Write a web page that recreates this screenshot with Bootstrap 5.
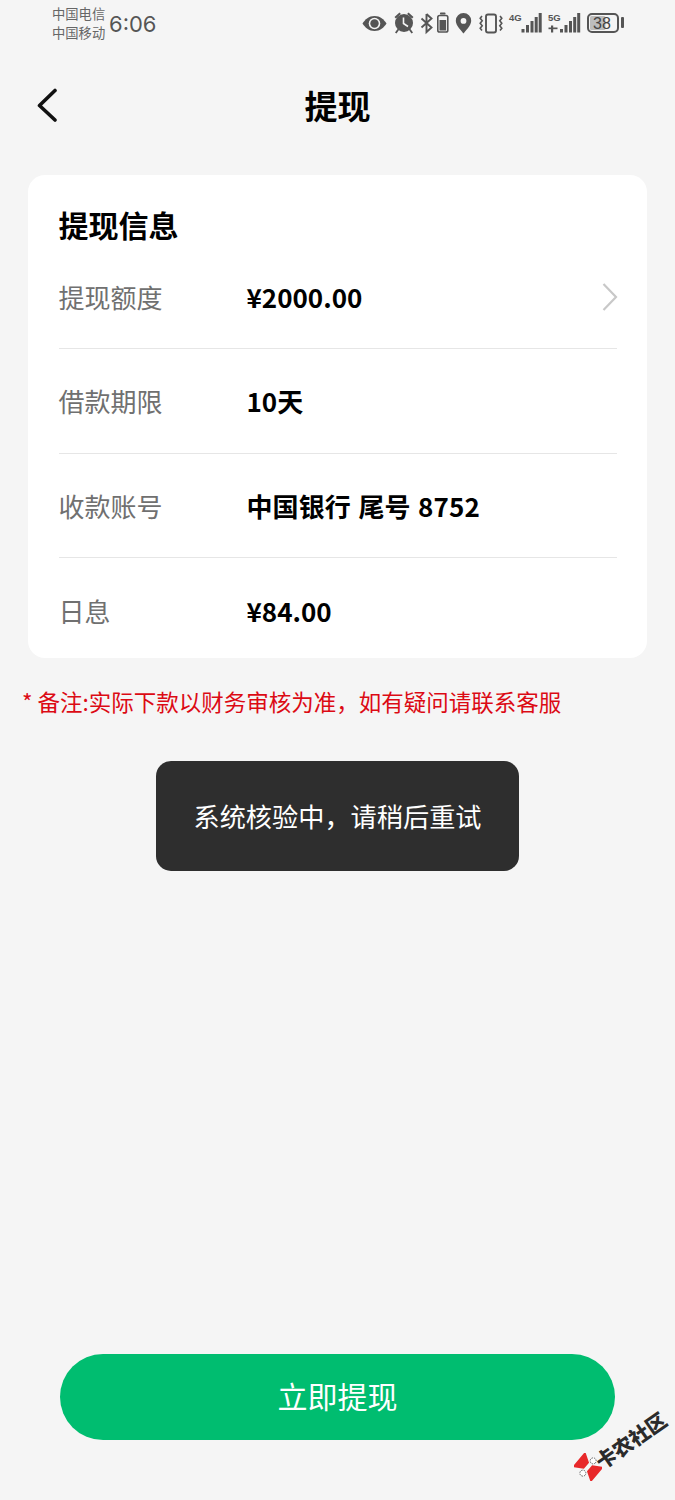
<!DOCTYPE html>
<html lang="zh-CN">
<head>
<meta charset="utf-8">
<title>提现</title>
<link rel="stylesheet" href="https://cdn.jsdelivr.net/npm/bootstrap@5.3.0/dist/css/bootstrap.min.css">
<style>
html,body{margin:0;background:#f5f5f5;}
body{font-family:"Noto Sans CJK SC","Noto Sans",sans-serif;color:#000;}
.page-wrap{width:675px;height:1500px;position:relative;overflow:hidden;padding-bottom:60px;}
.status-strip{height:48px;padding:4px 51px 0 52px;color:#555;}
.carriers{font-size:13.300px;line-height:19px;color:#666;width:56px;}
.clock{font-family:"Inter","Noto Sans",sans-serif;font-size:22px;line-height:39px;color:#555;margin-left:1px;height:39px;padding-top:1px;}
.st-icons{margin-left:auto;height:38px;}
.st-icons svg{display:block;}
.head-bar{height:118px;position:relative;}
.back-arrow{position:absolute;left:36px;top:40px;}
.head-title{font-size:33px;font-weight:700;line-height:114px;text-align:center;}
.info-panel{margin:9px 28px 0 28px;height:483px;background:#fff;border-radius:17px;border:0;padding:0 30px 0 30.500px;}
.panel-title{font-size:30px;font-weight:700;line-height:42px;padding-top:28px;height:73px;}
.info-line{height:104.500px;border-bottom:1px solid #e6e6e6;position:relative;align-items:center;}
.info-line.top-line{height:101px;padding-bottom:3px;}
.info-line.end-line{border-bottom:0;height:100px;padding-top:4px;}
.line-label{font-size:26px;color:#707070;width:188px;flex:none;}
.line-value{font-size:26px;font-weight:700;color:#000;}
.wide-words{word-spacing:1.500px;letter-spacing:.1px;}
.chev{position:absolute;right:-2px;top:34px;}
.note-text{font-size:22.500px;color:#dc0a14;margin:26px 0 0 22px;line-height:34px;white-space:nowrap;}
.toast-box{width:363px;height:110px;margin:43px auto 0;background:#2e2e2e;border-radius:15px;color:#fff;font-size:26.200px;line-height:38px;}
.cta{width:555px;height:86px;margin:auto auto 0;background:#00bd70;border-radius:43px;color:#fff;font-size:30px;border:0;padding:0 0 4px;}
.cta:hover,.cta:active{background:#00bd70!important;color:#fff!important;}
.mark-wrap{position:absolute;left:572px;top:1439px;width:100px;height:0;}
.mark-text{position:absolute;left:25px;top:8px;font-size:20.300px;font-weight:900;color:#2b2b2b;white-space:nowrap;transform:rotate(-35deg);transform-origin:0 50%;line-height:32px;}
.mark-logo{position:absolute;left:2px;top:14px;}
</style>
</head>
<body>
<div class="page-wrap d-flex flex-column">
  <div class="status-strip d-flex align-items-start">
    <div class="carriers"><div>中国电信</div><div>中国移动</div></div>
    <div class="clock">6:06</div>
    <div class="st-icons d-flex align-items-center">
      <svg width="272" height="38" viewBox="0 0 272 38">
        <g fill="#555" stroke="none">
          <!-- eye -->
          <path d="M22.500 12C28 12 32 15.500 34.500 19.500C32 23.500 28 27 22.500 27S13 23.500 10.500 19.500C13 15.500 17 12 22.500 12Z"/>
          <circle cx="22.500" cy="19.500" r="5.800" fill="#f5f5f5"/>
          <circle cx="22.500" cy="19.500" r="4.200"/>
          <!-- alarm -->
          <circle cx="52" cy="19" r="9"/>
          <path d="M42.500 13l5-4.500 1.400 1.600-5 4.500zM61.500 13l-5-4.500-1.400 1.600 5 4.500zM45.500 25l-2.500 3.500 1.500 1 2.500-3.500zM58.500 25l2.500 3.500-1.500 1-2.500-3.500z"/>
          <path d="M51.500 13.500v6l4.500 3" fill="none" stroke="#f5f5f5" stroke-width="1.600"/>
          <!-- bluetooth -->
          <path d="M74.500 10v18l5-4.500-10-9M74.500 10l5 4.500-10 9" fill="none" stroke="#555" stroke-width="1.900"/>
          <!-- mini battery -->
          <rect x="88" y="8.500" width="5.500" height="2" rx=".7"/>
          <rect x="85.800" y="11.500" width="10" height="16.500" rx="1.800" fill="none" stroke="#555" stroke-width="1.600"/>
          <rect x="87.500" y="16" width="6.600" height="10.500"/>
          <!-- pin -->
          <path fill-rule="evenodd" d="M111.500 9a7.700 7.700 0 0 1 7.700 7.700c0 5-5.700 10-7.700 12.800-2-2.800-7.700-7.800-7.700-12.800a7.700 7.700 0 0 1 7.700-7.700Zm0 5a2.900 2.900 0 1 0 0 5.800a2.900 2.900 0 0 0 0-5.800Z"/>
          <!-- vibrate -->
          <rect x="134" y="10.500" width="10" height="18" rx="2" fill="none" stroke="#555" stroke-width="1.900"/>
          <path d="M130 12l-1.800 2.300 2 2.500-2 2.500 2 2.500-2 2.500 1.800 2.200M148 12l1.800 2.300-2 2.500 2 2.500-2 2.500 2 2.500-1.800 2.200" fill="none" stroke="#555" stroke-width="1.600"/>
          <!-- signal 1 -->
          <text x="157" y="16.500" font-family="Liberation Sans,sans-serif" font-size="9.500" font-weight="700" fill="#555">4G</text>
          <rect x="169.500" y="25" width="3" height="3.500"/>
          <rect x="174" y="21" width="3" height="7.500"/>
          <rect x="178.500" y="17" width="3" height="11.500"/>
          <rect x="182.700" y="13" width="3" height="15.500"/>
          <rect x="186.700" y="9" width="3" height="19.500"/>
          <!-- signal 2 -->
          <text x="196" y="16.500" font-family="Liberation Sans,sans-serif" font-size="9.500" font-weight="700" fill="#555">5G</text>
          <rect x="196.500" y="23.500" width="9" height="1.700"/>
          <rect x="199" y="21.500" width="2.200" height="7"/>
          <rect x="208" y="25" width="3" height="3.500"/>
          <rect x="212.500" y="21" width="3" height="7.500"/>
          <rect x="217" y="17" width="3" height="11.500"/>
          <rect x="221.200" y="13" width="3" height="15.500"/>
          <rect x="225.200" y="9" width="3" height="19.500"/>
          <!-- battery -->
          <rect x="236" y="10" width="30" height="18" rx="4" fill="none" stroke="#555" stroke-width="2"/>
          <rect x="238" y="12" width="15.500" height="14" rx="1.500" fill="#bdbdbd"/>
          <text x="241" y="25" font-family="Liberation Sans,sans-serif" font-size="16" fill="#444">38</text>
          <rect x="269" y="13" width="3" height="11" rx="1"/>
        </g>
      </svg>
    </div>
  </div>

  <div class="head-bar">
    <svg class="back-arrow" width="22" height="34" viewBox="0 0 22 34" aria-hidden="true"><path d="M19 2.500 3.500 17.500 19 32" fill="none" stroke="#111" stroke-width="3.600" stroke-linecap="round" stroke-linejoin="round"/></svg>
    <div class="head-title">提现</div>
  </div>

  <div class="card info-panel">
    <div class="panel-title">提现信息</div>
    <div class="info-line top-line d-flex">
      <div class="line-label">提现额度</div>
      <div class="line-value">¥2000.00</div>
      <svg class="chev" width="18" height="30" viewBox="0 0 18 30" aria-hidden="true"><path d="M2.500 2 15 15 2.500 28" fill="none" stroke="#c8c8c8" stroke-width="2.200"/></svg>
    </div>
    <div class="info-line d-flex">
      <div class="line-label">借款期限</div>
      <div class="line-value">10天</div>
    </div>
    <div class="info-line d-flex">
      <div class="line-label">收款账号</div>
      <div class="line-value wide-words">中国银行 尾号 8752</div>
    </div>
    <div class="info-line end-line d-flex">
      <div class="line-label">日息</div>
      <div class="line-value">¥84.00</div>
    </div>
  </div>

  <div class="note-text">* 备注:实际下款以财务审核为准，如有疑问请联系客服</div>

  <div class="toast-box d-flex align-items-center justify-content-center">系统核验中，请稍后重试</div>

  <button type="button" class="btn cta d-flex align-items-center justify-content-center">立即提现</button>

  <div class="mark-wrap">
    <svg class="mark-logo" width="28" height="28" viewBox="0 0 28 28" aria-hidden="true">
      <g transform="rotate(40 14 14)">
        <path d="M2 4 12 10 12 18 2 24Z M26 4 16 10 16 18 26 24Z" fill="#e8282a"/>
        <circle cx="14" cy="6" r="3" fill="#fff" stroke="#333" stroke-width=".7" stroke-dasharray="1.500 1"/>
        <circle cx="14" cy="22" r="3" fill="#fff" stroke="#333" stroke-width=".7" stroke-dasharray="1.500 1"/>
      </g>
    </svg>
    <div class="mark-text">卡农社区</div>
  </div>
</div>
<script src="https://cdn.jsdelivr.net/npm/bootstrap@5.3.0/dist/js/bootstrap.bundle.min.js"></script>
</body>
</html>
